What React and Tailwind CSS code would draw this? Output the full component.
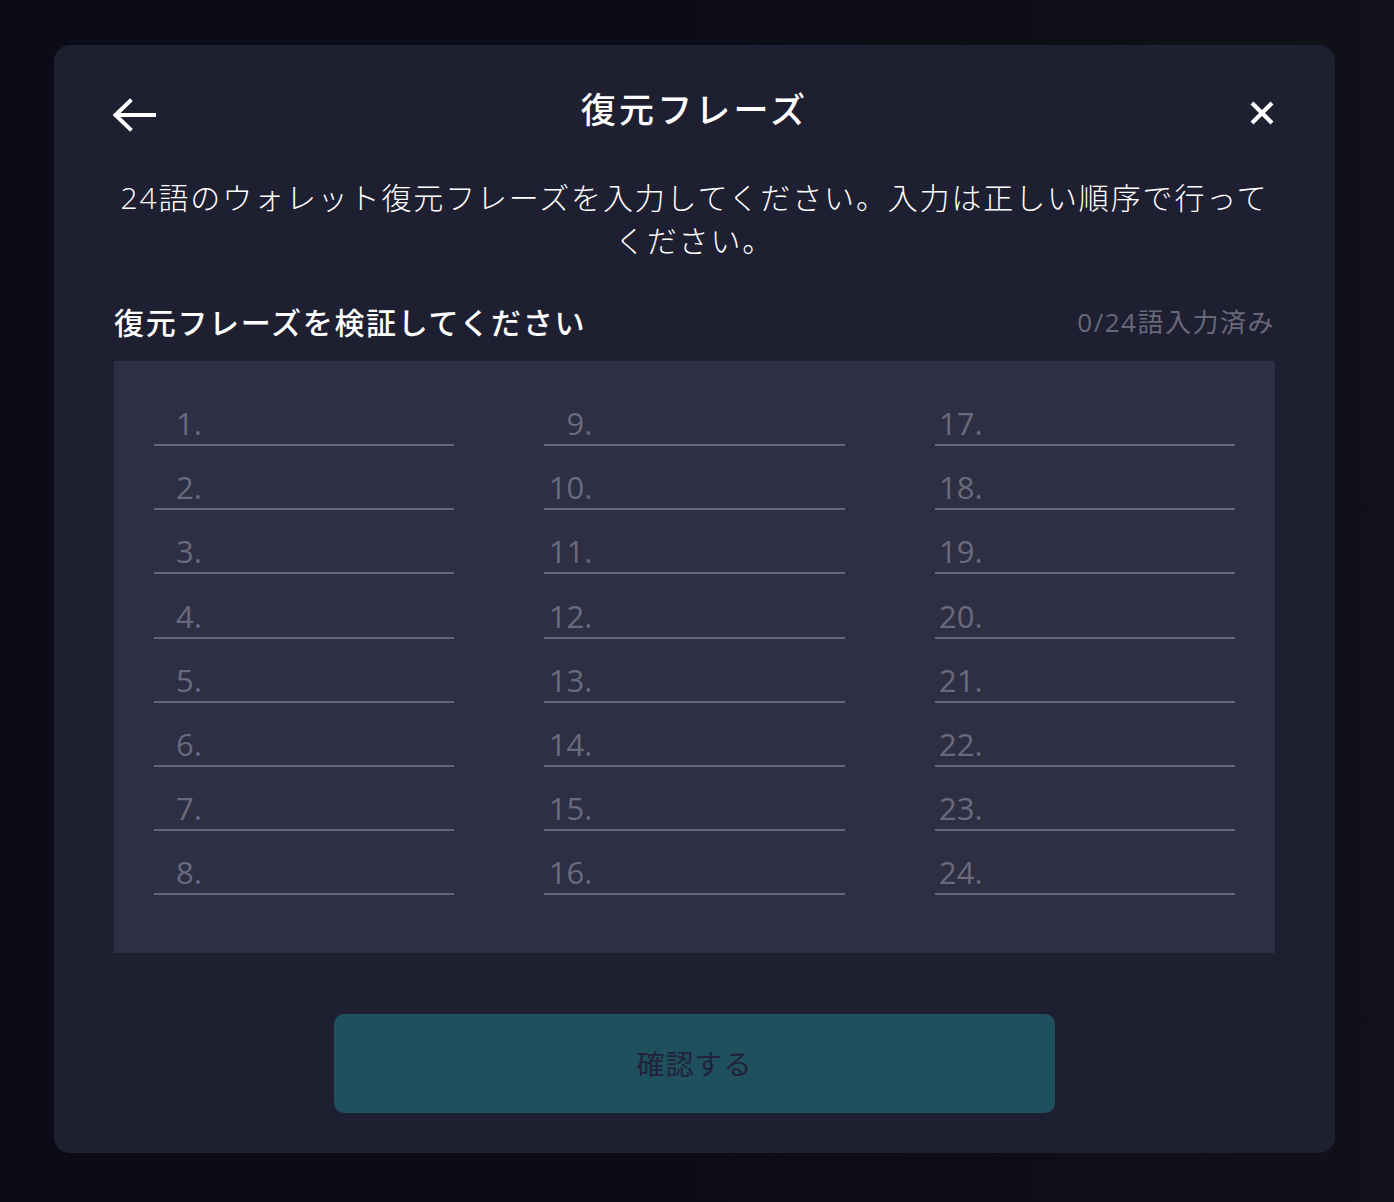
import { useState } from "react";

const FONT = "font-['Open_Sans','Noto_Sans_CJK_JP',sans-serif]";

function BackArrow() {
  return (
    <svg width="44" height="34" viewBox="0 0 44 34" fill="none">
      <path
        d="M42 17H4M18 3 3.5 17 18 31"
        stroke="white"
        strokeWidth="4"
        strokeLinecap="square"
      />
    </svg>
  );
}

function CloseIcon() {
  return (
    <svg width="26" height="26" viewBox="0 0 26 26" fill="none">
      <path d="M3 3l20 20M23 3 3 23" stroke="white" strokeWidth="4.2" />
    </svg>
  );
}

function WordField({ index, value, onChange }) {
  return (
    <label className="flex h-[64.15px] items-end border-b-2 border-[#676778]">
      <span className="w-[48px] shrink-0 pb-[5px] text-right text-[31px] leading-none text-[#6a6a7c]">
        {index}.
      </span>
      <input
        value={value}
        onChange={(event) => onChange(index - 1, event.target.value)}
        className="min-w-0 flex-1 bg-transparent pb-[5px] pl-2 text-[28px] leading-none text-white outline-none"
      />
    </label>
  );
}

export default function App() {
  const [words, setWords] = useState(Array(24).fill(""));
  const filled = words.filter((word) => word.trim()).length;

  const handleChange = (position, text) => {
    setWords((current) =>
      current.map((word, i) => (i === position ? text : word)),
    );
  };

  const columns = [0, 1, 2].map((col) =>
    Array.from({ length: 8 }, (_, row) => col * 8 + row + 1),
  );

  return (
    <div
      className={`min-h-screen bg-gradient-to-r from-[#0b0c17] via-[#0c0c18] to-[#111119] pt-[45px] pl-[54px] ${FONT}`}
    >
      <div className="w-[1281px] rounded-[16px] bg-[#1f1f32] px-[60px] pt-[39px] pb-[40px]">
        <div className="grid h-[56px] grid-cols-[1fr_auto_1fr] items-center">
          <button type="button" className="-ml-[2px] mt-[6px] justify-self-start">
            <BackArrow />
          </button>
          <h1 className="-mt-[4px] text-[35px] font-medium tracking-[3.2px] text-white">
            復元フレーズ
          </h1>
          <button type="button" className="mt-[2px] justify-self-end">
            <CloseIcon />
          </button>
        </div>

        <p className="mt-[36px] text-center text-[30px] font-light leading-[43px] tracking-[1.85px] text-white">
          24語のウォレット復元フレーズを入力してください。入力は正しい順序で行ってください。
        </p>

        <div className="mt-[40px] flex h-[40px] items-center justify-between">
          <h2 className="text-[30px] font-medium tracking-[1.7px] text-white">
            復元フレーズを検証してください
          </h2>
          <span className="text-[26px] tracking-[1.5px] text-[#686879]">
            {filled}/24語入力済み
          </span>
        </div>

        <div className="mt-[19px] grid grid-cols-3 gap-x-[90px] bg-[#2e2f42] px-[40px] pt-[21px] pb-[58px]">
          {columns.map((column, c) => (
            <div key={c} className="flex flex-col">
              {column.map((n) => (
                <WordField
                  key={n}
                  index={n}
                  value={words[n - 1]}
                  onChange={handleChange}
                />
              ))}
            </div>
          ))}
        </div>

        <div className="mt-[61px] flex justify-center">
          <button
            type="button"
            disabled={filled < 24}
            className="h-[99px] w-[721px] rounded-[10px] bg-[#1f505e] text-[28px] tracking-[1px] text-[#22223a]"
          >
            確認する
          </button>
        </div>
      </div>
    </div>
  );
}
